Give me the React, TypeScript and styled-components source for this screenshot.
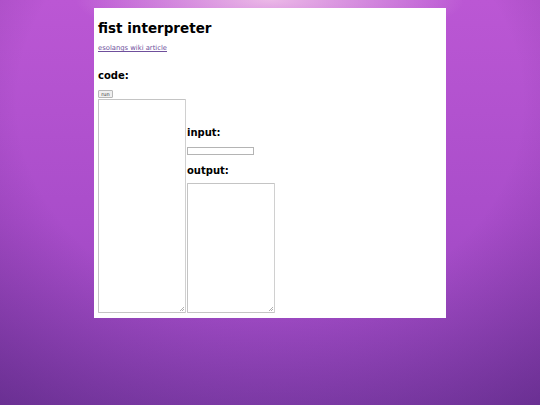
import React from "react";
import styled, { createGlobalStyle } from "styled-components";

const GlobalStyle = createGlobalStyle`
  html {
    min-height: 100%;
    background:
      radial-gradient(ellipse 36% 11% at 50% 0%, rgba(238, 190, 232, 0.95), rgba(238, 190, 232, 0) 100%),
      radial-gradient(ellipse 85% 95% at 50% 25%, rgba(40, 10, 80, 0) 55%, rgba(40, 10, 80, 0.38) 100%),
      linear-gradient(to bottom, #bb57d4 0%, #a94dca 55%, #9045b9 100%);
    background-attachment: fixed;
  }
  body {
    margin: 0;
    padding-top: 8px;
    font-family: "DejaVu Sans", sans-serif;
    color: #000;
  }
`;

const Page = styled.main`
  width: 352px;
  margin: 0 auto;
  box-sizing: border-box;
  background: #fff;
  padding: 4px 4px 5px;
`;

const Title = styled.h1`
  font-size: 13.5px;
  line-height: 16px;
  font-weight: bold;
  margin: 8px 0 0;
`;

const WikiLink = styled.a`
  display: block;
  width: fit-content;
  margin-top: 8px;
  font-size: 6.8px;
  line-height: 8px;
  color: #6f4f9c;
`;

const SectionHeading = styled.h2<{ $gap: number }>`
  font-size: 10px;
  line-height: 12px;
  font-weight: bold;
  margin: ${(p) => p.$gap}px 0 0;
`;

const RunButton = styled.button`
  display: block;
  margin-top: 8px;
  width: 15px;
  height: 8px;
  padding: 0;
  box-sizing: border-box;
  border: 1px solid #b8b8b8;
  border-radius: 1px;
  background: #efefef;
  font-family: "DejaVu Sans", sans-serif;
  font-size: 5px;
  line-height: 6px;
  color: #333;
`;

const Workspace = styled.div`
  display: flex;
  align-items: flex-end;
  gap: 1px;
  margin-top: 1px;
`;

const Column = styled.div`
  display: flex;
  flex-direction: column;
`;

const Box = styled.textarea<{ $height: number }>`
  display: block;
  width: 88px;
  height: ${(p) => p.$height}px;
  box-sizing: border-box;
  margin: 0;
  border: 1px solid #c4c4c4;
  border-right-color: #d0d0d0;
  border-radius: 1px;
  resize: none;
  background:
    linear-gradient(
      135deg,
      transparent 0 55%,
      #b0b0b0 55% 65%,
      transparent 65% 75%,
      #b0b0b0 75% 85%,
      transparent 85%
    )
    no-repeat right 1px bottom 1px / 5px 5px,
    #fff;
`;

const TextField = styled.input`
  display: block;
  width: 67px;
  height: 8px;
  box-sizing: border-box;
  margin: 8px 0 0;
  padding: 0;
  border: 1px solid #b4b4b4;
  border-radius: 0;
  background: #fff;
`;

const App: React.FC = () => (
  <>
    <GlobalStyle />
    <Page>
      <Title>fist interpreter</Title>
      <WikiLink href="#">esolangs wiki article</WikiLink>
      <SectionHeading $gap={18}>code:</SectionHeading>
      <RunButton>run</RunButton>
      <Workspace>
        <Box $height={214} />
        <Column>
          <SectionHeading $gap={0}>input:</SectionHeading>
          <TextField />
          <SectionHeading $gap={10}>output:</SectionHeading>
          <Box $height={130} style={{ marginTop: 6 }} />
        </Column>
      </Workspace>
    </Page>
  </>
);

export default App;
